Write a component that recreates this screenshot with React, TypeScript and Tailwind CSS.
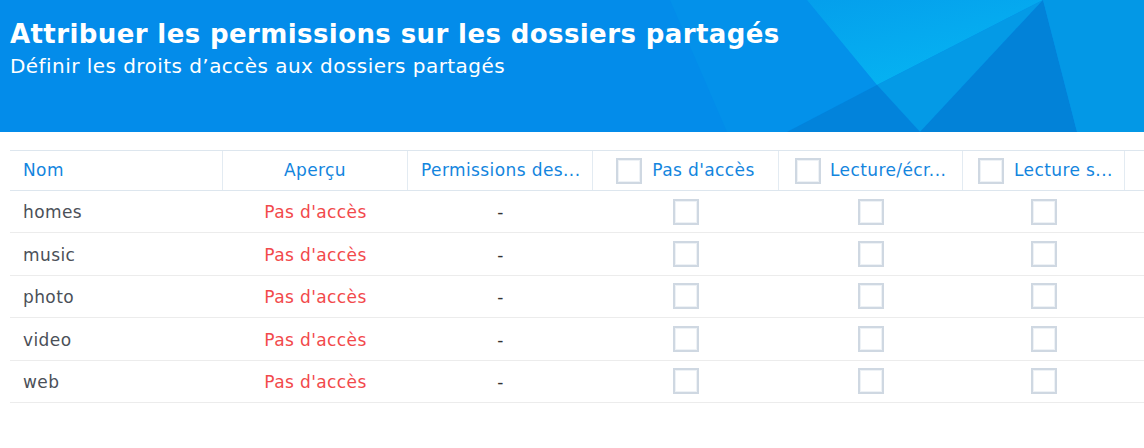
import React from 'react';

const rows = ['homes', 'music', 'photo', 'video', 'web'];

const Box: React.FC = () => (
  <span className="inline-block w-[26px] h-[26px] border-2 border-[#cfd8e2] bg-white shadow-[inset_0_0_0_1px_#eef2f6] shrink-0" />
);

const HeaderArt: React.FC = () => (
  <svg className="absolute inset-0 w-full h-full" viewBox="0 0 1144 132" preserveAspectRatio="none">
    <defs>
      <linearGradient id="cyan" x1="0" y1="0" x2="0.6" y2="1">
        <stop offset="0" stopColor="#049fec" />
        <stop offset="1" stopColor="#06b4f2" />
      </linearGradient>
    </defs>
    <rect width="1144" height="132" fill="#038cea" />
    <polygon points="670,0 807,0 877,85 787,132 727,132" fill="#0391ea" />
    <polygon points="807,0 1043,0 877,85" fill="url(#cyan)" />
    <polygon points="877,85 1043,0 920,132" fill="#049ae6" />
    <polygon points="1043,0 920,132 1077,132" fill="#0282d8" />
    <polygon points="1043,0 1144,0 1144,132 1077,132" fill="#0398e6" />
    <polygon points="787,132 877,85 920,132" fill="#0283db" />
  </svg>
);

export default function App() {
  return (
    <div className="w-[1144px] h-[448px] bg-white overflow-hidden" style={{ fontFamily: '"DejaVu Sans", sans-serif' }}>
      {/* banner */}
      <div className="relative h-[132px] text-white">
        <HeaderArt />
        <div className="relative pl-[10px] pt-[19px]">
          <h1 className="text-[26px] font-bold leading-[30px] tracking-[0.4px] whitespace-nowrap">
            Attribuer les permissions sur les dossiers partagés
          </h1>
          <p className="text-[20px] leading-[24px] mt-[5px] tracking-[0.45px] whitespace-nowrap">
            Définir les droits d’accès aux dossiers partagés
          </p>
        </div>
      </div>

      {/* table */}
      <div className="ml-[10px] mt-[18px] text-[17px] tracking-[0.4px]">
        <div className="grid grid-cols-[213px_185px_185px_186px_184px_162px_1fr] h-[41px] border-t border-b border-[#dde6ee] text-[#1385de]">
          <div className="flex items-center pl-[13px] pt-[1px] border-r border-[#e3ebf2]">Nom</div>
          <div className="flex items-center justify-center pt-[1px] border-r border-[#e3ebf2]">Aperçu</div>
          <div className="flex items-center pl-[13px] pt-[1px] border-r border-[#e3ebf2] overflow-hidden">
            <span className="whitespace-nowrap">Permissions des...</span>
          </div>
          <div className="flex items-center justify-center gap-[10px] border-r border-[#e3ebf2]">
            <Box />
            <span className="whitespace-nowrap">Pas d'accès</span>
          </div>
          <div className="flex items-center pl-[16px] gap-[9px] border-r border-[#e3ebf2] overflow-hidden">
            <Box />
            <span className="whitespace-nowrap">Lecture/écr...</span>
          </div>
          <div className="flex items-center pl-[15px] gap-[10px] border-r border-[#e3ebf2] overflow-hidden">
            <Box />
            <span className="whitespace-nowrap">Lecture s...</span>
          </div>
          <div />
        </div>
        {rows.map((name) => (
          <div
            key={name}
            className="grid grid-cols-[213px_185px_185px_186px_184px_162px_1fr] h-[42.4px] border-b border-[#ececec]"
          >
            <div className="flex items-center pl-[13px] pt-[3px] text-[#4b5058]">{name}</div>
            <div className="flex items-center justify-center pt-[3px] text-[#f2494b]">Pas d'accès</div>
            <div className="flex items-center justify-center pt-[3px] text-[#333]">-</div>
            <div className="flex items-center justify-center">
              <Box />
            </div>
            <div className="flex items-center justify-center">
              <Box />
            </div>
            <div className="flex items-center justify-center">
              <Box />
            </div>
            <div />
          </div>
        ))}
      </div>
    </div>
  );
}
